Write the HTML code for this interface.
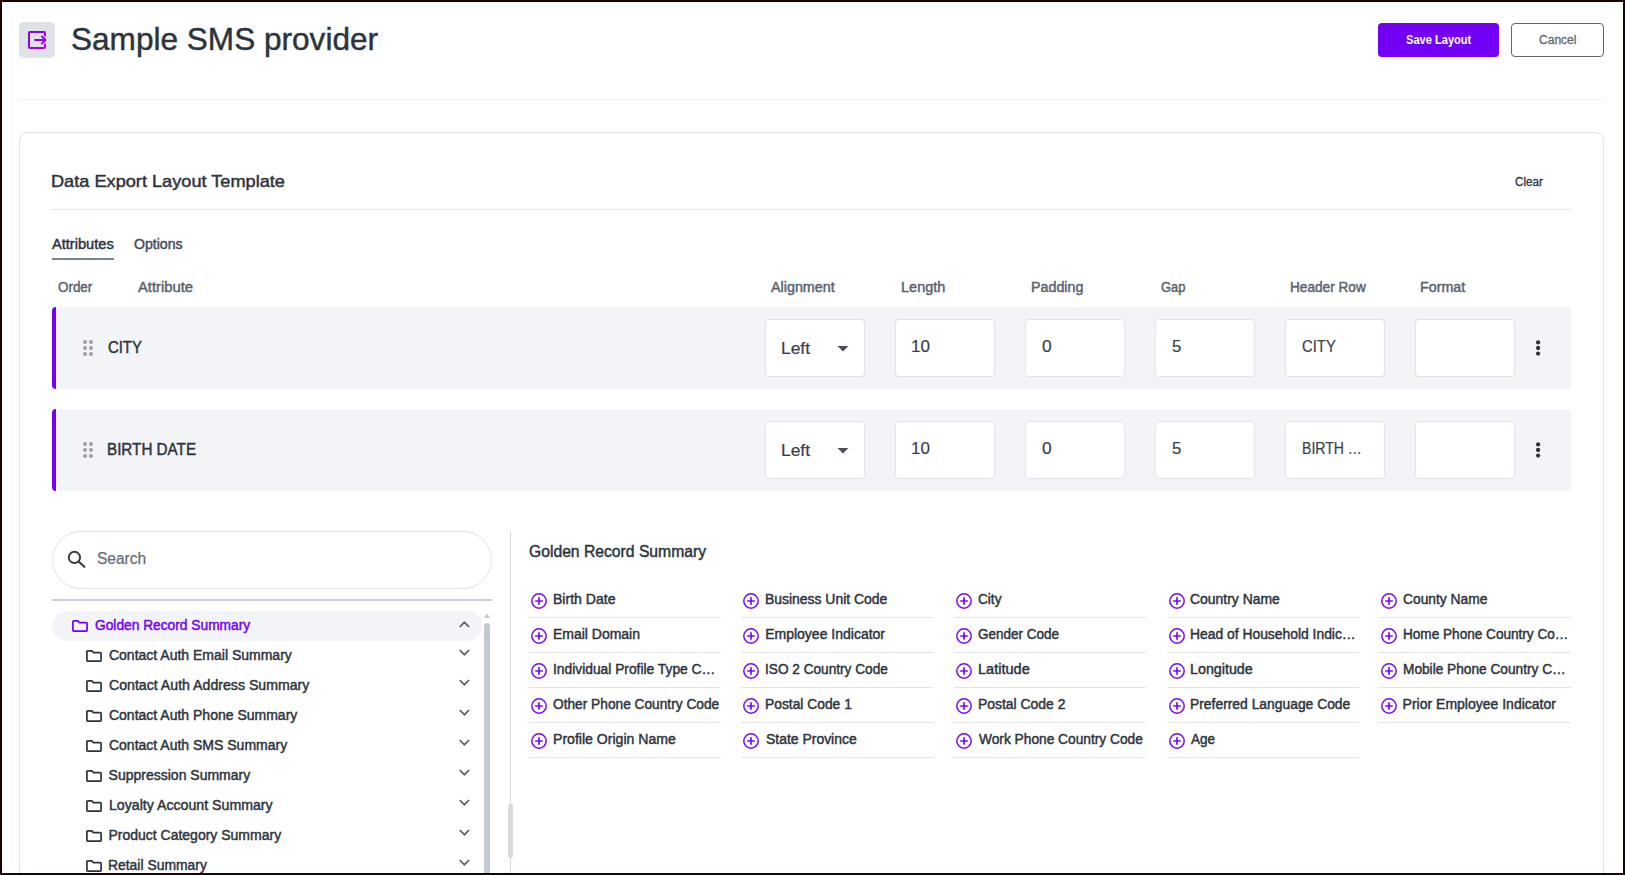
<!DOCTYPE html>
<html lang="en">
<head>
<meta charset="utf-8">
<title>Sample SMS provider</title>
<style>
*{box-sizing:border-box;margin:0;padding:0}
html,body{width:1625px;height:875px;overflow:hidden;background:#fff}
body{font-family:"Liberation Sans",sans-serif;color:#2d333d;position:relative}
.frame{position:absolute;left:0;top:0;width:1625px;height:875px;border:2px solid #210000;z-index:50;pointer-events:none}
.abs{position:absolute}
.t{position:absolute;white-space:nowrap;line-height:1;transform-origin:0 50%}
.med{-webkit-text-stroke:0.45px currentColor}
.iconbox{left:19px;top:22px;width:36px;height:36px;border-radius:5px;background:#dfe2e7}
.btn{position:absolute;top:23px;height:34px;border-radius:4px}
.save{left:1378px;width:121px;background:#7300f5}
.cancel{left:1511px;width:93px;border:1px solid #626973;background:#fff}
.hr1{left:19px;top:99px;width:1585px;height:1px;background:#f0f1f5}
.card{left:19px;top:132px;width:1585px;height:800px;border:1px solid #dfe3ec;border-radius:9px;background:#fff}
.hr2{left:52px;top:209px;width:1519px;height:1px;background:#e1e4ee}
.tabline{left:52px;top:258px;width:62px;height:2px;background:#7d8491}
.row{left:52px;width:1519px;height:82px;background:#f3f4f8;border-left:4px solid #7300f5;border-radius:4px}
.inp{position:absolute;width:100px;height:58px;background:#fff;border:1px solid #e0e3ea;border-radius:4px}
.kebab{position:absolute;width:5px;height:5px;border-radius:50%;background:#2d333d;left:1535.7px}
.search{left:52px;top:531px;width:440px;height:58px;border:1px solid #dfe3ec;border-radius:29px}
.hr3{left:52px;top:599px;width:440px;height:2px;background:#c9ced8}
.vdiv{left:510px;top:531px;width:1px;height:400px;background:#d6d6d8}
.sel{left:52px;top:611px;width:430px;height:30px;border-radius:15px;background:#f3f4f8}
.sb1{left:484px;top:623px;width:6px;height:300px;border-radius:3px;background:#c3c8d2}
.sb2{left:508px;top:804px;width:5px;height:54px;border-radius:2.5px;background:#d9d9d9}
.gi{position:absolute;width:192px;height:35px;border-bottom:1.5px solid #e4e4e7}
.gi svg{position:absolute;left:1px;top:9.2px}
</style>
</head>
<body>
<div class="frame"></div>
<div class="abs iconbox">
<svg width="36" height="36" viewBox="0 0 36 36"><defs><linearGradient id="g" x1="0" y1="0" x2="1" y2="1"><stop offset="0" stop-color="#7a00ff"/><stop offset="1" stop-color="#b400d8"/></linearGradient></defs>
<path d="M26 13.500V11a1 1 0 0 0-1-1H11a1 1 0 0 0-1 1v14a1 1 0 0 0 1 1h14a1 1 0 0 0 1-1v-2.500" fill="none" stroke="url(#g)" stroke-width="2" stroke-linecap="round"/>
<path d="M16 18h10M23 14.500l3.500 3.500-3.500 3.500" fill="none" stroke="url(#g)" stroke-width="2" stroke-linecap="round" stroke-linejoin="round"/></svg>
</div>
<div class="btn save"></div><div class="btn cancel"></div><div class="abs hr1"></div>
<div class="abs card"></div><div class="abs hr2"></div><div class="abs tabline"></div>
<div class="abs row" style="top:307px"></div>
<svg class="abs" style="left:82px;top:339px" width="12" height="18" viewBox="0 0 12 18" fill="#9ba1ab"><circle cx="3" cy="3" r="2"/><circle cx="9" cy="3" r="2"/><circle cx="3" cy="9" r="2"/><circle cx="9" cy="9" r="2"/><circle cx="3" cy="15" r="2"/><circle cx="9" cy="15" r="2"/></svg>
<div class="inp" style="left:765px;top:319px"></div>
<div class="inp" style="left:895px;top:319px"></div>
<div class="inp" style="left:1025px;top:319px"></div>
<div class="inp" style="left:1155px;top:319px"></div>
<div class="inp" style="left:1285px;top:319px"></div>
<div class="inp" style="left:1415px;top:319px"></div>
<svg class="abs" style="left:837px;top:345.5px" width="12" height="6" viewBox="0 0 12 6"><path d="M0.500 0h11L6 5.500z" fill="#4a505a"/></svg>
<svg class="abs" style="left:1534px;top:338px" width="8" height="20" viewBox="0 0 8 20" fill="#2d333d"><circle cx="4.100" cy="4.400" r="2.150"/><circle cx="4.100" cy="10" r="2.150"/><circle cx="4.100" cy="15.600" r="2.150"/></svg>
<div class="abs row" style="top:409px"></div>
<svg class="abs" style="left:82px;top:441px" width="12" height="18" viewBox="0 0 12 18" fill="#9ba1ab"><circle cx="3" cy="3" r="2"/><circle cx="9" cy="3" r="2"/><circle cx="3" cy="9" r="2"/><circle cx="9" cy="9" r="2"/><circle cx="3" cy="15" r="2"/><circle cx="9" cy="15" r="2"/></svg>
<div class="inp" style="left:765px;top:421px"></div>
<div class="inp" style="left:895px;top:421px"></div>
<div class="inp" style="left:1025px;top:421px"></div>
<div class="inp" style="left:1155px;top:421px"></div>
<div class="inp" style="left:1285px;top:421px"></div>
<div class="inp" style="left:1415px;top:421px"></div>
<svg class="abs" style="left:837px;top:447.5px" width="12" height="6" viewBox="0 0 12 6"><path d="M0.500 0h11L6 5.500z" fill="#4a505a"/></svg>
<svg class="abs" style="left:1534px;top:440px" width="8" height="20" viewBox="0 0 8 20" fill="#2d333d"><circle cx="4.100" cy="4.400" r="2.150"/><circle cx="4.100" cy="10" r="2.150"/><circle cx="4.100" cy="15.600" r="2.150"/></svg>
<div class="abs search"></div>
<svg class="abs" style="left:66px;top:550px" width="22" height="22" viewBox="0 0 22 22"><circle cx="8.450" cy="7.400" r="5.600" fill="none" stroke="#333841" stroke-width="1.900"/><path d="M12.600 11.500l5.800 5.300" stroke="#333841" stroke-width="2.100" stroke-linecap="round"/></svg>
<div class="abs hr3"></div><div class="abs vdiv"></div><div class="abs sel"></div>
<svg class="abs" style="left:72px;top:620px" width="16" height="12" viewBox="0 0 16 12"><path d="M1.700 .9h4.100l1.600 1.700h6.900a.8.800 0 0 1 .8.800v6.900a.8.800 0 0 1-.8.800H1.700a.8.800 0 0 1-.8-.8V1.700a.8.800 0 0 1 .8-.8z" fill="none" stroke="#7300f5" stroke-width="1.700" stroke-linejoin="round"/></svg>
<svg class="abs" style="left:458.5px;top:620.6px" width="12" height="8" viewBox="0 0 12 8"><path d="M.7 6l4.700-4.700 4.700 4.700" fill="none" stroke="#5e6064" stroke-width="1.750"/></svg>
<svg class="abs" style="left:86px;top:650px" width="16" height="12" viewBox="0 0 16 12"><path d="M1.700 .9h4.100l1.600 1.700h6.900a.8.800 0 0 1 .8.800v6.900a.8.800 0 0 1-.8.800H1.700a.8.800 0 0 1-.8-.8V1.700a.8.800 0 0 1 .8-.8z" fill="none" stroke="#2d333d" stroke-width="1.700" stroke-linejoin="round"/></svg>
<svg class="abs" style="left:458.5px;top:649.2px" width="12" height="8" viewBox="0 0 12 8"><path d="M.7 1l4.700 4.700 4.700-4.700" fill="none" stroke="#5e6064" stroke-width="1.750"/></svg>
<svg class="abs" style="left:86px;top:680px" width="16" height="12" viewBox="0 0 16 12"><path d="M1.700 .9h4.100l1.600 1.700h6.900a.8.800 0 0 1 .8.800v6.900a.8.800 0 0 1-.8.800H1.700a.8.800 0 0 1-.8-.8V1.700a.8.800 0 0 1 .8-.8z" fill="none" stroke="#2d333d" stroke-width="1.700" stroke-linejoin="round"/></svg>
<svg class="abs" style="left:458.5px;top:679.2px" width="12" height="8" viewBox="0 0 12 8"><path d="M.7 1l4.700 4.700 4.700-4.700" fill="none" stroke="#5e6064" stroke-width="1.750"/></svg>
<svg class="abs" style="left:86px;top:710px" width="16" height="12" viewBox="0 0 16 12"><path d="M1.700 .9h4.100l1.600 1.700h6.900a.8.800 0 0 1 .8.800v6.900a.8.800 0 0 1-.8.800H1.700a.8.800 0 0 1-.8-.8V1.700a.8.800 0 0 1 .8-.8z" fill="none" stroke="#2d333d" stroke-width="1.700" stroke-linejoin="round"/></svg>
<svg class="abs" style="left:458.5px;top:709.2px" width="12" height="8" viewBox="0 0 12 8"><path d="M.7 1l4.700 4.700 4.700-4.700" fill="none" stroke="#5e6064" stroke-width="1.750"/></svg>
<svg class="abs" style="left:86px;top:740px" width="16" height="12" viewBox="0 0 16 12"><path d="M1.700 .9h4.100l1.600 1.700h6.900a.8.800 0 0 1 .8.800v6.900a.8.800 0 0 1-.8.800H1.700a.8.800 0 0 1-.8-.8V1.700a.8.800 0 0 1 .8-.8z" fill="none" stroke="#2d333d" stroke-width="1.700" stroke-linejoin="round"/></svg>
<svg class="abs" style="left:458.5px;top:739.2px" width="12" height="8" viewBox="0 0 12 8"><path d="M.7 1l4.700 4.700 4.700-4.700" fill="none" stroke="#5e6064" stroke-width="1.750"/></svg>
<svg class="abs" style="left:86px;top:770px" width="16" height="12" viewBox="0 0 16 12"><path d="M1.700 .9h4.100l1.600 1.700h6.900a.8.800 0 0 1 .8.800v6.900a.8.800 0 0 1-.8.800H1.700a.8.800 0 0 1-.8-.8V1.700a.8.800 0 0 1 .8-.8z" fill="none" stroke="#2d333d" stroke-width="1.700" stroke-linejoin="round"/></svg>
<svg class="abs" style="left:458.5px;top:769.2px" width="12" height="8" viewBox="0 0 12 8"><path d="M.7 1l4.700 4.700 4.700-4.700" fill="none" stroke="#5e6064" stroke-width="1.750"/></svg>
<svg class="abs" style="left:86px;top:800px" width="16" height="12" viewBox="0 0 16 12"><path d="M1.700 .9h4.100l1.600 1.700h6.900a.8.800 0 0 1 .8.800v6.900a.8.800 0 0 1-.8.800H1.700a.8.800 0 0 1-.8-.8V1.700a.8.800 0 0 1 .8-.8z" fill="none" stroke="#2d333d" stroke-width="1.700" stroke-linejoin="round"/></svg>
<svg class="abs" style="left:458.5px;top:799.2px" width="12" height="8" viewBox="0 0 12 8"><path d="M.7 1l4.700 4.700 4.700-4.700" fill="none" stroke="#5e6064" stroke-width="1.750"/></svg>
<svg class="abs" style="left:86px;top:830px" width="16" height="12" viewBox="0 0 16 12"><path d="M1.700 .9h4.100l1.600 1.700h6.900a.8.800 0 0 1 .8.800v6.900a.8.800 0 0 1-.8.800H1.700a.8.800 0 0 1-.8-.8V1.700a.8.800 0 0 1 .8-.8z" fill="none" stroke="#2d333d" stroke-width="1.700" stroke-linejoin="round"/></svg>
<svg class="abs" style="left:458.5px;top:829.2px" width="12" height="8" viewBox="0 0 12 8"><path d="M.7 1l4.700 4.700 4.700-4.700" fill="none" stroke="#5e6064" stroke-width="1.750"/></svg>
<svg class="abs" style="left:86px;top:860px" width="16" height="12" viewBox="0 0 16 12"><path d="M1.700 .9h4.100l1.600 1.700h6.900a.8.800 0 0 1 .8.800v6.900a.8.800 0 0 1-.8.800H1.700a.8.800 0 0 1-.8-.8V1.700a.8.800 0 0 1 .8-.8z" fill="none" stroke="#2d333d" stroke-width="1.700" stroke-linejoin="round"/></svg>
<svg class="abs" style="left:458.5px;top:859.2px" width="12" height="8" viewBox="0 0 12 8"><path d="M.7 1l4.700 4.700 4.700-4.700" fill="none" stroke="#5e6064" stroke-width="1.750"/></svg>
<svg class="abs" style="left:484px;top:613px" width="6" height="5" viewBox="0 0 6 5"><path d="M3 .5L6 5H0z" fill="#c3c8d2"/></svg>
<div class="abs sb1"></div><div class="abs sb2"></div>
<div class="gi" style="left:529px;top:583px"><svg width="18" height="18" viewBox="0 0 18 18"><circle cx="9" cy="9" r="7.200" fill="none" stroke="#7a0af0" stroke-width="1.500"/><path d="M9 5.200v7.600M5.200 9h7.600" stroke="#7a0af0" stroke-width="1.700"/></svg></div>
<div class="gi" style="left:741px;top:583px"><svg width="18" height="18" viewBox="0 0 18 18"><circle cx="9" cy="9" r="7.200" fill="none" stroke="#7a0af0" stroke-width="1.500"/><path d="M9 5.200v7.600M5.200 9h7.600" stroke="#7a0af0" stroke-width="1.700"/></svg></div>
<div class="gi" style="left:954px;top:583px"><svg width="18" height="18" viewBox="0 0 18 18"><circle cx="9" cy="9" r="7.200" fill="none" stroke="#7a0af0" stroke-width="1.500"/><path d="M9 5.200v7.600M5.200 9h7.600" stroke="#7a0af0" stroke-width="1.700"/></svg></div>
<div class="gi" style="left:1166.5px;top:583px"><svg width="18" height="18" viewBox="0 0 18 18"><circle cx="9" cy="9" r="7.200" fill="none" stroke="#7a0af0" stroke-width="1.500"/><path d="M9 5.200v7.600M5.200 9h7.600" stroke="#7a0af0" stroke-width="1.700"/></svg></div>
<div class="gi" style="left:1379px;top:583px"><svg width="18" height="18" viewBox="0 0 18 18"><circle cx="9" cy="9" r="7.200" fill="none" stroke="#7a0af0" stroke-width="1.500"/><path d="M9 5.200v7.600M5.200 9h7.600" stroke="#7a0af0" stroke-width="1.700"/></svg></div>
<div class="gi" style="left:529px;top:618px"><svg width="18" height="18" viewBox="0 0 18 18"><circle cx="9" cy="9" r="7.200" fill="none" stroke="#7a0af0" stroke-width="1.500"/><path d="M9 5.200v7.600M5.200 9h7.600" stroke="#7a0af0" stroke-width="1.700"/></svg></div>
<div class="gi" style="left:741px;top:618px"><svg width="18" height="18" viewBox="0 0 18 18"><circle cx="9" cy="9" r="7.200" fill="none" stroke="#7a0af0" stroke-width="1.500"/><path d="M9 5.200v7.600M5.200 9h7.600" stroke="#7a0af0" stroke-width="1.700"/></svg></div>
<div class="gi" style="left:954px;top:618px"><svg width="18" height="18" viewBox="0 0 18 18"><circle cx="9" cy="9" r="7.200" fill="none" stroke="#7a0af0" stroke-width="1.500"/><path d="M9 5.200v7.600M5.200 9h7.600" stroke="#7a0af0" stroke-width="1.700"/></svg></div>
<div class="gi" style="left:1166.5px;top:618px"><svg width="18" height="18" viewBox="0 0 18 18"><circle cx="9" cy="9" r="7.200" fill="none" stroke="#7a0af0" stroke-width="1.500"/><path d="M9 5.200v7.600M5.200 9h7.600" stroke="#7a0af0" stroke-width="1.700"/></svg></div>
<div class="gi" style="left:1379px;top:618px"><svg width="18" height="18" viewBox="0 0 18 18"><circle cx="9" cy="9" r="7.200" fill="none" stroke="#7a0af0" stroke-width="1.500"/><path d="M9 5.200v7.600M5.200 9h7.600" stroke="#7a0af0" stroke-width="1.700"/></svg></div>
<div class="gi" style="left:529px;top:653px"><svg width="18" height="18" viewBox="0 0 18 18"><circle cx="9" cy="9" r="7.200" fill="none" stroke="#7a0af0" stroke-width="1.500"/><path d="M9 5.200v7.600M5.200 9h7.600" stroke="#7a0af0" stroke-width="1.700"/></svg></div>
<div class="gi" style="left:741px;top:653px"><svg width="18" height="18" viewBox="0 0 18 18"><circle cx="9" cy="9" r="7.200" fill="none" stroke="#7a0af0" stroke-width="1.500"/><path d="M9 5.200v7.600M5.200 9h7.600" stroke="#7a0af0" stroke-width="1.700"/></svg></div>
<div class="gi" style="left:954px;top:653px"><svg width="18" height="18" viewBox="0 0 18 18"><circle cx="9" cy="9" r="7.200" fill="none" stroke="#7a0af0" stroke-width="1.500"/><path d="M9 5.200v7.600M5.200 9h7.600" stroke="#7a0af0" stroke-width="1.700"/></svg></div>
<div class="gi" style="left:1166.5px;top:653px"><svg width="18" height="18" viewBox="0 0 18 18"><circle cx="9" cy="9" r="7.200" fill="none" stroke="#7a0af0" stroke-width="1.500"/><path d="M9 5.200v7.600M5.200 9h7.600" stroke="#7a0af0" stroke-width="1.700"/></svg></div>
<div class="gi" style="left:1379px;top:653px"><svg width="18" height="18" viewBox="0 0 18 18"><circle cx="9" cy="9" r="7.200" fill="none" stroke="#7a0af0" stroke-width="1.500"/><path d="M9 5.200v7.600M5.200 9h7.600" stroke="#7a0af0" stroke-width="1.700"/></svg></div>
<div class="gi" style="left:529px;top:688px"><svg width="18" height="18" viewBox="0 0 18 18"><circle cx="9" cy="9" r="7.200" fill="none" stroke="#7a0af0" stroke-width="1.500"/><path d="M9 5.200v7.600M5.200 9h7.600" stroke="#7a0af0" stroke-width="1.700"/></svg></div>
<div class="gi" style="left:741px;top:688px"><svg width="18" height="18" viewBox="0 0 18 18"><circle cx="9" cy="9" r="7.200" fill="none" stroke="#7a0af0" stroke-width="1.500"/><path d="M9 5.200v7.600M5.200 9h7.600" stroke="#7a0af0" stroke-width="1.700"/></svg></div>
<div class="gi" style="left:954px;top:688px"><svg width="18" height="18" viewBox="0 0 18 18"><circle cx="9" cy="9" r="7.200" fill="none" stroke="#7a0af0" stroke-width="1.500"/><path d="M9 5.200v7.600M5.200 9h7.600" stroke="#7a0af0" stroke-width="1.700"/></svg></div>
<div class="gi" style="left:1166.5px;top:688px"><svg width="18" height="18" viewBox="0 0 18 18"><circle cx="9" cy="9" r="7.200" fill="none" stroke="#7a0af0" stroke-width="1.500"/><path d="M9 5.200v7.600M5.200 9h7.600" stroke="#7a0af0" stroke-width="1.700"/></svg></div>
<div class="gi" style="left:1379px;top:688px"><svg width="18" height="18" viewBox="0 0 18 18"><circle cx="9" cy="9" r="7.200" fill="none" stroke="#7a0af0" stroke-width="1.500"/><path d="M9 5.200v7.600M5.200 9h7.600" stroke="#7a0af0" stroke-width="1.700"/></svg></div>
<div class="gi" style="left:529px;top:723px"><svg width="18" height="18" viewBox="0 0 18 18"><circle cx="9" cy="9" r="7.200" fill="none" stroke="#7a0af0" stroke-width="1.500"/><path d="M9 5.200v7.600M5.200 9h7.600" stroke="#7a0af0" stroke-width="1.700"/></svg></div>
<div class="gi" style="left:741px;top:723px"><svg width="18" height="18" viewBox="0 0 18 18"><circle cx="9" cy="9" r="7.200" fill="none" stroke="#7a0af0" stroke-width="1.500"/><path d="M9 5.200v7.600M5.200 9h7.600" stroke="#7a0af0" stroke-width="1.700"/></svg></div>
<div class="gi" style="left:954px;top:723px"><svg width="18" height="18" viewBox="0 0 18 18"><circle cx="9" cy="9" r="7.200" fill="none" stroke="#7a0af0" stroke-width="1.500"/><path d="M9 5.200v7.600M5.200 9h7.600" stroke="#7a0af0" stroke-width="1.700"/></svg></div>
<div class="gi" style="left:1166.5px;top:723px"><svg width="18" height="18" viewBox="0 0 18 18"><circle cx="9" cy="9" r="7.200" fill="none" stroke="#7a0af0" stroke-width="1.500"/><path d="M9 5.200v7.600M5.200 9h7.600" stroke="#7a0af0" stroke-width="1.700"/></svg></div>
<div id="title" class="t " style="left:70.83px;top:21px;font-size:32px;transform:translateY(0px) scaleX(0.9865);line-height:36px;color:#2d333d;-webkit-text-stroke:0.45px #2d333d">Sample SMS provider</div>
<div id="save" class="t " style="left:1405.82px;top:34px;font-size:12px;transform:translateY(0px) scaleX(0.9234);color:#fff;font-weight:700">Save Layout</div>
<div id="cancel" class="t " style="left:1538.98px;top:34px;font-size:12px;transform:translateY(0px) scaleX(1.0030);color:#5d6673;-webkit-text-stroke:0.3px #5d6673">Cancel</div>
<div id="det" class="t med" style="left:51.14px;top:173px;font-size:17px;transform:translateY(0px) scaleX(1.0687);">Data Export Layout Template</div>
<div id="clear" class="t " style="left:1515.00px;top:176px;font-size:12px;transform:translateY(0px) scaleX(0.9731);-webkit-text-stroke:0.3px #2d333d">Clear</div>
<div id="tab1" class="t med" style="left:52.22px;top:237px;font-size:14px;transform:translateY(0px) scaleX(1.0430);">Attributes</div>
<div id="tab2" class="t med" style="left:133.97px;top:237px;font-size:14px;transform:translateY(0px) scaleX(1.0063);color:#444b57">Options</div>
<div id="ch0" class="t med" style="left:58.22px;top:280px;font-size:14px;transform:translateY(0px) scaleX(0.9565);color:#5a626f">Order</div>
<div id="ch1" class="t med" style="left:138.16px;top:280px;font-size:14px;transform:translateY(0px) scaleX(1.0543);color:#5a626f">Attribute</div>
<div id="ch2" class="t med" style="left:771.36px;top:280px;font-size:14px;transform:translateY(0px) scaleX(1.0232);color:#5a626f">Alignment</div>
<div id="ch3" class="t med" style="left:900.52px;top:280px;font-size:14px;transform:translateY(0px) scaleX(1.0366);color:#5a626f">Length</div>
<div id="ch4" class="t med" style="left:1030.55px;top:280px;font-size:14px;transform:translateY(0px) scaleX(1.0205);color:#5a626f">Padding</div>
<div id="ch5" class="t med" style="left:1161.20px;top:280px;font-size:14px;transform:translateY(0px) scaleX(0.9217);color:#5a626f">Gap</div>
<div id="ch6" class="t med" style="left:1290.30px;top:280px;font-size:14px;transform:translateY(0px) scaleX(0.9740);color:#5a626f">Header Row</div>
<div id="ch7" class="t med" style="left:1420.08px;top:280px;font-size:14px;transform:translateY(0px) scaleX(1.0195);color:#5a626f">Format</div>
<div id="r0n" class="t med" style="left:107.90px;top:340.3px;font-size:16px;transform:translateY(0px) scaleX(0.9280);">CITY</div>
<div id="r0a" class="t " style="left:780.85px;top:340.6px;font-size:16px;transform:translateY(0px) scaleX(1.0882);color:#3a404a;-webkit-text-stroke:0.2px #3a404a">Left</div>
<div id="r0b" class="t " style="left:911.37px;top:339.2px;font-size:16px;transform:translateY(0px) scaleX(1.0602);color:#3a404a;-webkit-text-stroke:0.2px #3a404a">10</div>
<div id="r0c" class="t " style="left:1041.90px;top:339.2px;font-size:16px;transform:translateY(0px) scaleX(1.0840);color:#3a404a;-webkit-text-stroke:0.2px #3a404a">0</div>
<div id="r0d" class="t " style="left:1172.05px;top:339.2px;font-size:16px;transform:translateY(0px) scaleX(1.0419);color:#3a404a;-webkit-text-stroke:0.2px #3a404a">5</div>
<div id="r0e" class="t " style="left:1302.21px;top:339.2px;font-size:16px;transform:translateY(0px) scaleX(0.9268);color:#3a404a;-webkit-text-stroke:0.2px #3a404a">CITY</div>
<div id="r1n" class="t med" style="left:107.09px;top:442.3px;font-size:16px;transform:translateY(0px) scaleX(0.9509);">BIRTH DATE</div>
<div id="r1a" class="t " style="left:780.85px;top:442.6px;font-size:16px;transform:translateY(0px) scaleX(1.0882);color:#3a404a;-webkit-text-stroke:0.2px #3a404a">Left</div>
<div id="r1b" class="t " style="left:911.37px;top:441.2px;font-size:16px;transform:translateY(0px) scaleX(1.0602);color:#3a404a;-webkit-text-stroke:0.2px #3a404a">10</div>
<div id="r1c" class="t " style="left:1041.90px;top:441.2px;font-size:16px;transform:translateY(0px) scaleX(1.0840);color:#3a404a;-webkit-text-stroke:0.2px #3a404a">0</div>
<div id="r1d" class="t " style="left:1172.05px;top:441.2px;font-size:16px;transform:translateY(0px) scaleX(1.0419);color:#3a404a;-webkit-text-stroke:0.2px #3a404a">5</div>
<div id="r1e" class="t " style="left:1301.89px;top:441.2px;font-size:16px;transform:translateY(0px) scaleX(0.8794);color:#3a404a;-webkit-text-stroke:0.2px #3a404a">BIRTH …</div>
<div id="search" class="t " style="left:96.90px;top:551px;font-size:16px;transform:translateY(0px) scaleX(0.9690);color:#666d78;-webkit-text-stroke:0.25px #666d78">Search</div>
<div id="tree0" class="t med" style="left:95.01px;top:618px;font-size:14px;transform:translateY(0px) scaleX(0.9823);color:#7300f5">Golden Record Summary</div>
<div id="tk0" class="t med" style="left:108.97px;top:648px;font-size:14px;">Contact Auth Email Summary</div>
<div id="tk1" class="t med" style="left:108.97px;top:678px;font-size:14px;transform:translateY(0px) scaleX(1.0099);">Contact Auth Address Summary</div>
<div id="tk2" class="t med" style="left:108.97px;top:708px;font-size:14px;">Contact Auth Phone Summary</div>
<div id="tk3" class="t med" style="left:108.97px;top:738px;font-size:14px;">Contact Auth SMS Summary</div>
<div id="tk4" class="t med" style="left:108.60px;top:768px;font-size:14px;">Suppression Summary</div>
<div id="tk5" class="t med" style="left:108.58px;top:798px;font-size:14px;transform:translateY(0px) scaleX(1.0110);">Loyalty Account Summary</div>
<div id="tk6" class="t med" style="left:108.41px;top:828px;font-size:14px;">Product Category Summary</div>
<div id="tk7" class="t med" style="left:108.38px;top:858px;font-size:14px;transform:translateY(0px) scaleX(0.9926);">Retail Summary</div>
<div id="ptitle" class="t med" style="left:528.99px;top:544.1px;font-size:16px;transform:translateY(0px) scaleX(0.9806);">Golden Record Summary</div>
<div id="g00" class="t med" style="left:552.81px;top:591.6px;font-size:14px;transform:translateY(0px) scaleX(1.0036);">Birth Date</div>
<div id="g01" class="t med" style="left:764.82px;top:591.6px;font-size:14px;transform:translateY(0px) scaleX(0.9947);">Business Unit Code</div>
<div id="g02" class="t med" style="left:978.18px;top:591.6px;font-size:14px;transform:translateY(0px) scaleX(0.9717);">City</div>
<div id="g03" class="t med" style="left:1190.49px;top:591.6px;font-size:14px;transform:translateY(0px) scaleX(0.9949);">Country Name</div>
<div id="g04" class="t med" style="left:1403.17px;top:591.6px;font-size:14px;transform:translateY(0px) scaleX(0.9866);">County Name</div>
<div id="g10" class="t med" style="left:552.81px;top:626.6px;font-size:14px;transform:translateY(0px) scaleX(0.9980);">Email Domain</div>
<div id="g11" class="t med" style="left:765.18px;top:626.6px;font-size:14px;">Employee Indicator</div>
<div id="g12" class="t med" style="left:978.18px;top:626.6px;font-size:14px;transform:translateY(0px) scaleX(0.9647);">Gender Code</div>
<div id="g13" class="t med" style="left:1190.25px;top:626.6px;font-size:14px;transform:translateY(0px) scaleX(0.9905);">Head of Household Indic…</div>
<div id="g14" class="t med" style="left:1402.63px;top:626.6px;font-size:14px;transform:translateY(0px) scaleX(0.9706);">Home Phone Country Co…</div>
<div id="g20" class="t med" style="left:552.73px;top:661.6px;font-size:14px;transform:translateY(0px) scaleX(0.9856);">Individual Profile Type C…</div>
<div id="g21" class="t med" style="left:765.12px;top:661.6px;font-size:14px;transform:translateY(0px) scaleX(0.9742);">ISO 2 Country Code</div>
<div id="g22" class="t med" style="left:977.55px;top:661.6px;font-size:14px;transform:translateY(0px) scaleX(1.0385);">Latitude</div>
<div id="g23" class="t med" style="left:1190.22px;top:661.6px;font-size:14px;transform:translateY(0px) scaleX(1.0196);">Longitude</div>
<div id="g24" class="t med" style="left:1402.95px;top:661.6px;font-size:14px;transform:translateY(0px) scaleX(0.9772);">Mobile Phone Country C…</div>
<div id="g30" class="t med" style="left:553.02px;top:696.6px;font-size:14px;transform:translateY(0px) scaleX(0.9797);">Other Phone Country Code</div>
<div id="g31" class="t med" style="left:765.19px;top:696.6px;font-size:14px;transform:translateY(0px) scaleX(0.9872);">Postal Code 1</div>
<div id="g32" class="t med" style="left:977.95px;top:696.6px;font-size:14px;transform:translateY(0px) scaleX(0.9937);">Postal Code 2</div>
<div id="g33" class="t med" style="left:1190.25px;top:696.6px;font-size:14px;transform:translateY(0px) scaleX(0.9900);">Preferred Language Code</div>
<div id="g34" class="t med" style="left:1402.61px;top:696.6px;font-size:14px;">Prior Employee Indicator</div>
<div id="g40" class="t med" style="left:552.80px;top:731.6px;font-size:14px;transform:translateY(0px) scaleX(1.0051);">Profile Origin Name</div>
<div id="g41" class="t med" style="left:765.93px;top:731.6px;font-size:14px;transform:translateY(0px) scaleX(0.9963);">State Province</div>
<div id="g42" class="t med" style="left:978.85px;top:731.6px;font-size:14px;transform:translateY(0px) scaleX(0.9804);">Work Phone Country Code</div>
<div id="g43" class="t med" style="left:1191.20px;top:731.6px;font-size:14px;transform:translateY(0px) scaleX(0.9645);">Age</div>
</body>
</html>
